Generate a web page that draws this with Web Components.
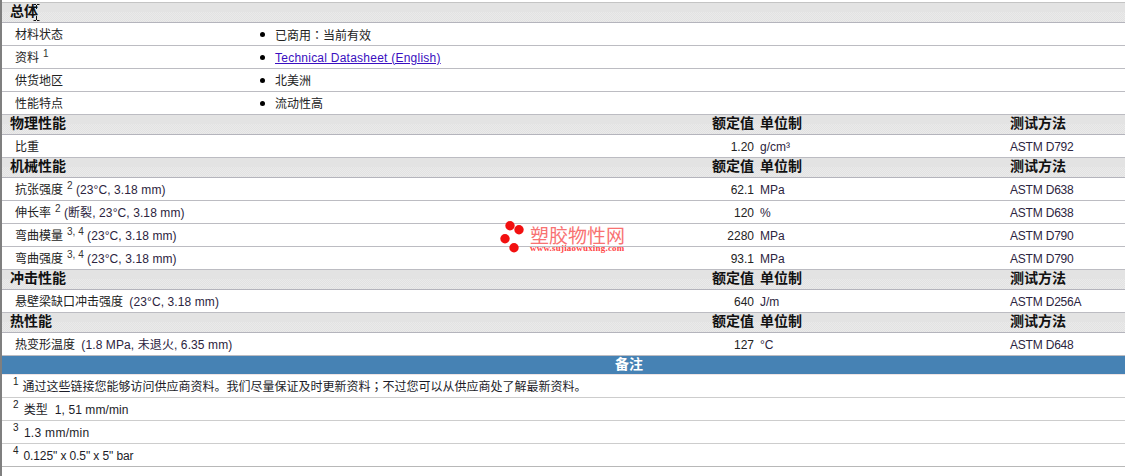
<!DOCTYPE html>
<html lang="zh"><head><meta charset="utf-8">
<style>
html,body{margin:0;background:#fff}
body{font:12px/16px "Liberation Sans","Noto Sans CJK SC",sans-serif;color:#222}
</style></head><body>
<tds-sheet>
<tds-head name="总体" plain></tds-head>
<tds-row name="材料状态" bullet="已商用：当前有效" tc></tds-row>
<tds-row name="资料" sup="1" bullet="Technical Datasheet (English)" link></tds-row>
<tds-row name="供货地区" bullet="北美洲"></tds-row>
<tds-row name="性能特点" bullet="流动性高"></tds-row>
<tds-head name="物理性能"></tds-head>
<tds-row name="比重" value="1.20" unit="g/cm³" method="ASTM D792"></tds-row>
<tds-head name="机械性能"></tds-head>
<tds-row name="抗张强度" sup="2" cond="(23°C, 3.18 mm)" value="62.1" unit="MPa" method="ASTM D638"></tds-row>
<tds-row name="伸长率" sup="2" cond="(断裂, 23°C, 3.18 mm)" value="120" unit="%" method="ASTM D638"></tds-row>
<tds-row name="弯曲模量" sup="3, 4" cond="(23°C, 3.18 mm)" value="2280" unit="MPa" method="ASTM D790"></tds-row>
<tds-row name="弯曲强度" sup="3, 4" cond="(23°C, 3.18 mm)" value="93.1" unit="MPa" method="ASTM D790"></tds-row>
<tds-head name="冲击性能"></tds-head>
<tds-row name="悬壁梁缺口冲击强度" cond="(23°C, 3.18 mm)" value="640" unit="J/m" method="ASTM D256A"></tds-row>
<tds-head name="热性能"></tds-head>
<tds-row name="热变形温度" cond="(1.8 MPa, 未退火, 6.35 mm)" value="127" unit="°C" method="ASTM D648"></tds-row>
<tds-notes-bar>备注</tds-notes-bar>
<tds-note n="1" style="padding-top:0"><span style="margin-left:-1px">通过这些链接您能够访问供应商资料。我们尽量保证及时更新资料<span lang="zh-Hant" style="font-family:'Noto Sans CJK TC',sans-serif">；</span>不过您可以从供应商处了解最新资料。</span></tds-note>
<tds-note n="2" style="letter-spacing:.1px">类型&nbsp; 1, 51 mm/min</tds-note>
<tds-note n="3" style="letter-spacing:.3px">1.3 mm/min</tds-note>
<tds-note n="4" style="letter-spacing:-.1px">0.125" x 0.5" x 5" bar</tds-note>
<tds-mark></tds-mark>
</tds-sheet>
<script>
const esc=s=>(s||'').replace(/&/g,'&amp;').replace(/</g,'&lt;').replace(/"/g,'&quot;');
class Base extends HTMLElement{
  constructor(){super();this.attachShadow({mode:'open'})}
}
customElements.define('tds-sheet',class extends Base{connectedCallback(){
  this.shadowRoot.innerHTML=`<style>:host{display:block;position:relative;box-sizing:border-box;height:476px;padding-top:2px;border-left:2px solid #7f7f7f}
  </style><slot></slot>`}});
customElements.define('tds-head',class extends Base{connectedCallback(){
  const n=this.getAttribute('name'),plain=this.hasAttribute('plain');
  this.shadowRoot.innerHTML=`<style>
  :host{display:grid;grid-template-columns:708px 44px 6px 250px 1fr;box-sizing:border-box;height:${plain?21:20}px;
   ${plain?'border-top:1px solid #c4c4c4;':''}border-bottom:1px solid #b4b4bc;padding-bottom:2px;
   background:linear-gradient(#e3e3e3 0 9px,transparent 9px),repeating-conic-gradient(#e2e2e2 0 25%,#eaeaea 0 50%) 0 0/2px 2px;
   font-weight:bold;font-size:14px;line-height:17px;color:#111;align-items:center}
  .n{padding-left:8px;white-space:nowrap;position:relative}
  .v{text-align:right;white-space:nowrap}.m{grid-column:5}
  svg{position:absolute;left:31px;top:1px}
  </style><span class="n">${esc(n)}${plain?'<svg width="7" height="17" viewBox="0 0 7 17" fill="none" stroke="#111"><path d="M.5 .5h2.500M6.500 .5H4M3.500 1v4M3.500 12v4M.5 16.500h2.500M6.500 16.500H4"/></svg>':''}</span>
  ${plain?'':'<span class="v">额定值</span><span></span><span class="u">单位制</span><span class="m">测试方法</span>'}`}});
customElements.define('tds-row',class extends Base{connectedCallback(){
  const a=k=>esc(this.getAttribute(k));
  const sup=a('sup'),b=this.getAttribute('bullet');
  const nm=`<span class="n">${a('name')}${sup?`<sup>${sup}</sup>`:''}${a('cond')?` <span class="c${sup?'':' g'}">${a('cond')}</span>`:''}</span>`;
  const body=b?`<span class="b${this.hasAttribute('tc')?' tc':''}"${this.hasAttribute('tc')?' lang="zh-Hant"':''}><i></i>${this.hasAttribute('link')?`<a href="#">${esc(b)}</a>`:esc(b)}</span>`
   :`<span class="v">${a('value')}</span><span></span><span class="u">${a('unit')}</span><span class="m">${a('method')}</span>`;
  this.shadowRoot.innerHTML=`<style>
  :host{display:grid;grid-template-columns:${b?'258px 1fr':'708px 44px 6px 250px 1fr'};box-sizing:border-box;height:23px;
   border-bottom:1px solid #bcbcc2;align-items:center;white-space:nowrap;background:#fff;padding-top:1px}
  :host(:has(+tds-head)){border-bottom-color:#cacaca}
  :host(:has(+tds-notes-bar)){border-bottom:0;height:22px}
  .n{padding-left:13px}
  .c{color:#2c2440;letter-spacing:.1px}
  .g{margin-left:3px}
  sup{font-size:10px;line-height:0;margin-left:4px;vertical-align:5px;color:#333}
  .v{text-align:right}.u{color:#2c2440}.m{grid-column:5;color:#2c2440;letter-spacing:-.2px}
  .b{display:flex;align-items:center}
  .tc{font-family:"Noto Sans CJK TC",sans-serif}
  i{width:5px;height:5px;border-radius:50%;background:#000;margin:0 10px 0 0;flex:none}
  a{color:#3a0fc0;text-decoration:underline;letter-spacing:.24px}
  </style>${nm}${body}`}});
customElements.define('tds-notes-bar',class extends Base{connectedCallback(){
  this.shadowRoot.innerHTML=`<style>:host{display:block;box-sizing:border-box;height:19px;background:#4682b4;border-bottom:1px solid #efe4e4;color:#fff;font-weight:bold;font-size:14px;line-height:16px;text-align:center;padding-left:131px}</style><slot></slot>`}});
customElements.define('tds-note',class extends Base{connectedCallback(){
  this.shadowRoot.innerHTML=`<style>:host{display:flex;align-items:center;box-sizing:border-box;height:23px;border-bottom:1px solid #cdcdcd;padding:2px 0 0 11px;white-space:nowrap;color:#1c1c28}
  :host(:last-of-type){border-bottom-color:#b8b8b8}
  sup{font-size:10px;line-height:0;vertical-align:6px;margin-right:5px;color:#222}
  </style><span><sup>${esc(this.getAttribute('n'))}</sup><slot></slot></span>`}});
customElements.define('tds-mark',class extends Base{connectedCallback(){
  this.shadowRoot.innerHTML=`<style>:host{position:absolute;left:498px;top:220px;width:130px;height:36px;display:block;pointer-events:none}
  svg{position:absolute;left:0;top:0}
  b{position:absolute;left:30px;top:5px;font:400 19px/19px "Noto Sans CJK SC",sans-serif;color:#f87272;white-space:nowrap}
  em{position:absolute;left:30px;top:24px;font:bold 9px/9px "Liberation Serif",serif;letter-spacing:.2px;color:#f44;white-space:nowrap}
  </style><svg width="30" height="34" viewBox="0 0 30 34" fill="#f21010"><circle cx="10" cy="5.700" r="4.700"/><circle cx="19" cy="9.700" r="4.700"/><circle cx="5" cy="18.700" r="4.700"/><circle cx="14" cy="27.700" r="4.700"/></svg><b>塑胶物性网</b><em>www.sujiaowuxing.com</em>`}});
</script>
</body></html>
